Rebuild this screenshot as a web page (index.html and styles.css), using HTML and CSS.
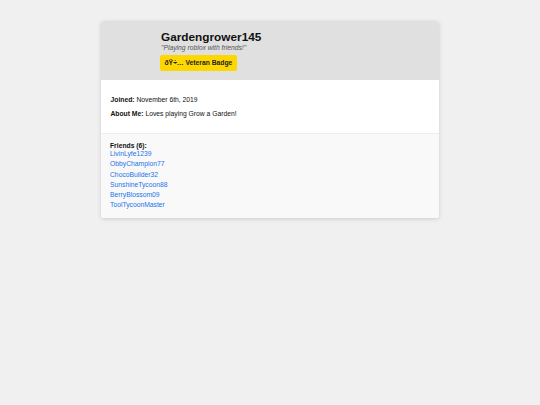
FILE: index.html
```html
<!doctype html>
<html lang="en">
  <head>
    <meta charset="UTF-8" />
    <meta name="viewport" content="width=device-width, initial-scale=1.0" />
    <title>Gardengrower145</title>
    <link rel="stylesheet" href="styles.css">
  </head>
  <body>

    <div class="profile">
      <div class="profile-header">
        <div class="avatar"></div>
        <div class="header-info">
          <h2 class="username">Gardengrower145</h2>
          <p class="status">"Playing roblox with friends!"</p>
          <span class="badge">ðŸ÷… Veteran Badge</span>
        </div>
      </div>

      <div class="profile-body">
        <p><strong>Joined:</strong> November 6th, 2019</p>
        <p><strong>About Me:</strong> Loves playing Grow a Garden!</p>
      </div>

      <div class="friends">
        <strong class="friends-title">Friends (6):</strong>
        <ul class="friend-list">
          <li><a href="#">LivinLyfe1239</a></li>
          <li><a href="#">ObbyChampion77</a></li>
          <li><a href="#">ChocoBuilder32</a></li>
          <li><a href="#">SunshineTycoon88</a></li>
          <li><a href="#">BerryBlossom09</a></li>
          <li><a href="#">ToolTycoonMaster</a></li>
        </ul>
      </div>
    </div>

  </body>
</html>
```

FILE: styles.css
```css
body {
  margin: 0;
  padding: 21px 0;
  background-color: #f0f0f0;
  font-family: "Liberation Sans", Arial, sans-serif;
  font-size: 6.75px;
  line-height: 7.875px;
  color: #111111;
}

.profile {
  width: 338px;
  margin: 0 auto;
  background-color: #ffffff;
  border-radius: 3px;
  box-shadow: 0 1px 4px rgba(0, 0, 0, 0.15);
  overflow: hidden;
}

.profile-header {
  display: flex;
  padding: 9.5px 9px;
  background-color: #e0e0e0;
}
.avatar {
  width: 45px;
  flex-shrink: 0;
  margin-right: 6px;
}
.username {
  margin: 0;
  font-size: 11.8px;
  line-height: 13.6px;
  font-weight: bold;
  color: #111111;
}
.status {
  margin: 0;
  font-style: italic;
  color: #555555;
}
.badge {
  display: inline-block;
  margin-top: 2.8px;
  margin-left: -1px;
  padding: 4px 4.5px;
  background-color: #ffd700;
  border-radius: 2px;
  font-weight: bold;
  color: #222222;
}

.profile-body {
  padding: 9.5px;
  border-bottom: 1px solid #eeeeee;
}
.profile-body p {
  margin: 6px 0;
}

.friends {
  padding: 8.5px 9px 9px;
  background-color: #f9f9f9;
}
.friends-title {
  display: block;
}
.friend-list {
  list-style: none;
  margin: 0;
  padding: 0;
}
.friend-list li {
  margin-bottom: 2.25px;
}
.friend-list li:last-child {
  margin-bottom: 0;
}
.friend-list a {
  color: #1a73e8;
  text-decoration: none;
}
```
